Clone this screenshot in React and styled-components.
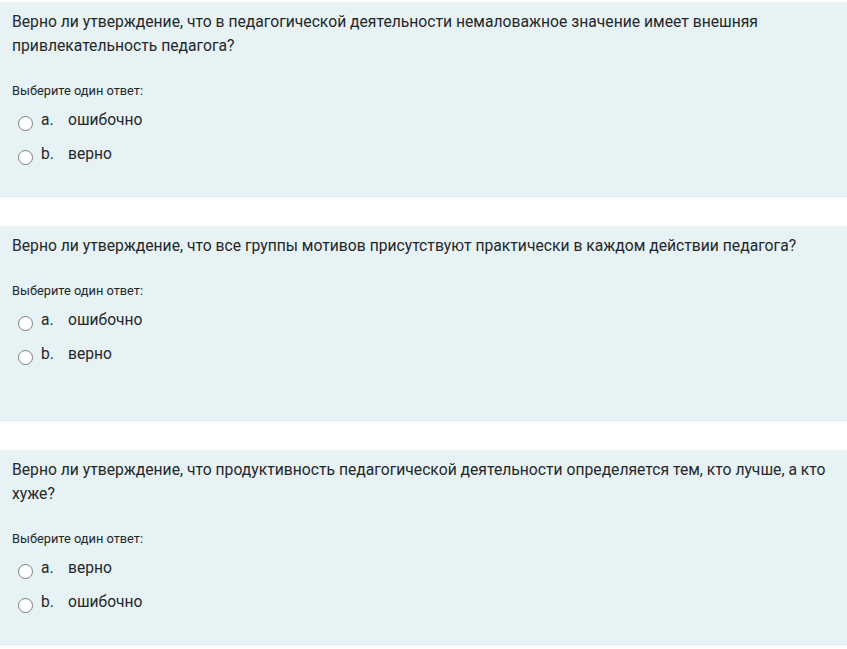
import styled, { createGlobalStyle } from "styled-components";

const GlobalStyle = createGlobalStyle`
  body {
    margin: 0;
    background: #ffffff;
    font-family: "Roboto", "Liberation Sans", sans-serif;
    color: #23272b;
  }
`;

const Page = styled.main`
  display: flex;
  flex-direction: column;
  gap: 29px;
  padding-top: 2px;
`;

const Card = styled.section`
  box-sizing: border-box;
  min-height: 195px;
  background: #e7f2f4;
  padding: 8px 12px 20px 12px;
  border-bottom: 1px solid #dfecef;
`;

const QText = styled.p`
  margin: 0;
  font-size: 15.7px;
  line-height: 24px;
`;

const Prompt = styled.div`
  margin-top: 24px;
  font-size: 12.8px;
  line-height: 18px;
`;

const Options = styled.div`
  display: flex;
  flex-direction: column;
  gap: 10px;
  margin-top: 8px;
  padding-left: 6px;
`;

const Option = styled.label`
  display: flex;
  align-items: center;
  font-size: 15.6px;
  line-height: 24px;
`;

const Radio = styled.span`
  box-sizing: border-box;
  width: 15px;
  height: 15px;
  border-radius: 50%;
  border: 1px solid #7b7f83;
  background: #ffffff;
  margin-top: 7px;
  margin-right: 8px;
  flex: none;
`;

const Letter = styled.span`
  width: 27px;
`;

const questions = [
  {
    text: "Верно ли утверждение, что в педагогической деятельности немаловажное значение имеет внешняя привлекательность педагога?",
    options: ["ошибочно", "верно"],
  },
  {
    text: "Верно ли утверждение, что все группы мотивов присутствуют практически в каждом действии педагога?",
    options: ["ошибочно", "верно"],
  },
  {
    text: "Верно ли утверждение, что продуктивность педагогической деятельности определяется тем, кто лучше, а кто хуже?",
    options: ["верно", "ошибочно"],
  },
];

export default function App() {
  return (
    <>
      <GlobalStyle />
      <Page>
        {questions.map((q, i) => (
          <Card key={i}>
            <QText>{q.text}</QText>
            <Prompt>Выберите один ответ:</Prompt>
            <Options>
              {q.options.map((o, j) => (
                <Option key={j}>
                  <Radio />
                  <Letter>{j === 0 ? "a." : "b."}</Letter>
                  {o}
                </Option>
              ))}
            </Options>
          </Card>
        ))}
      </Page>
    </>
  );
}
